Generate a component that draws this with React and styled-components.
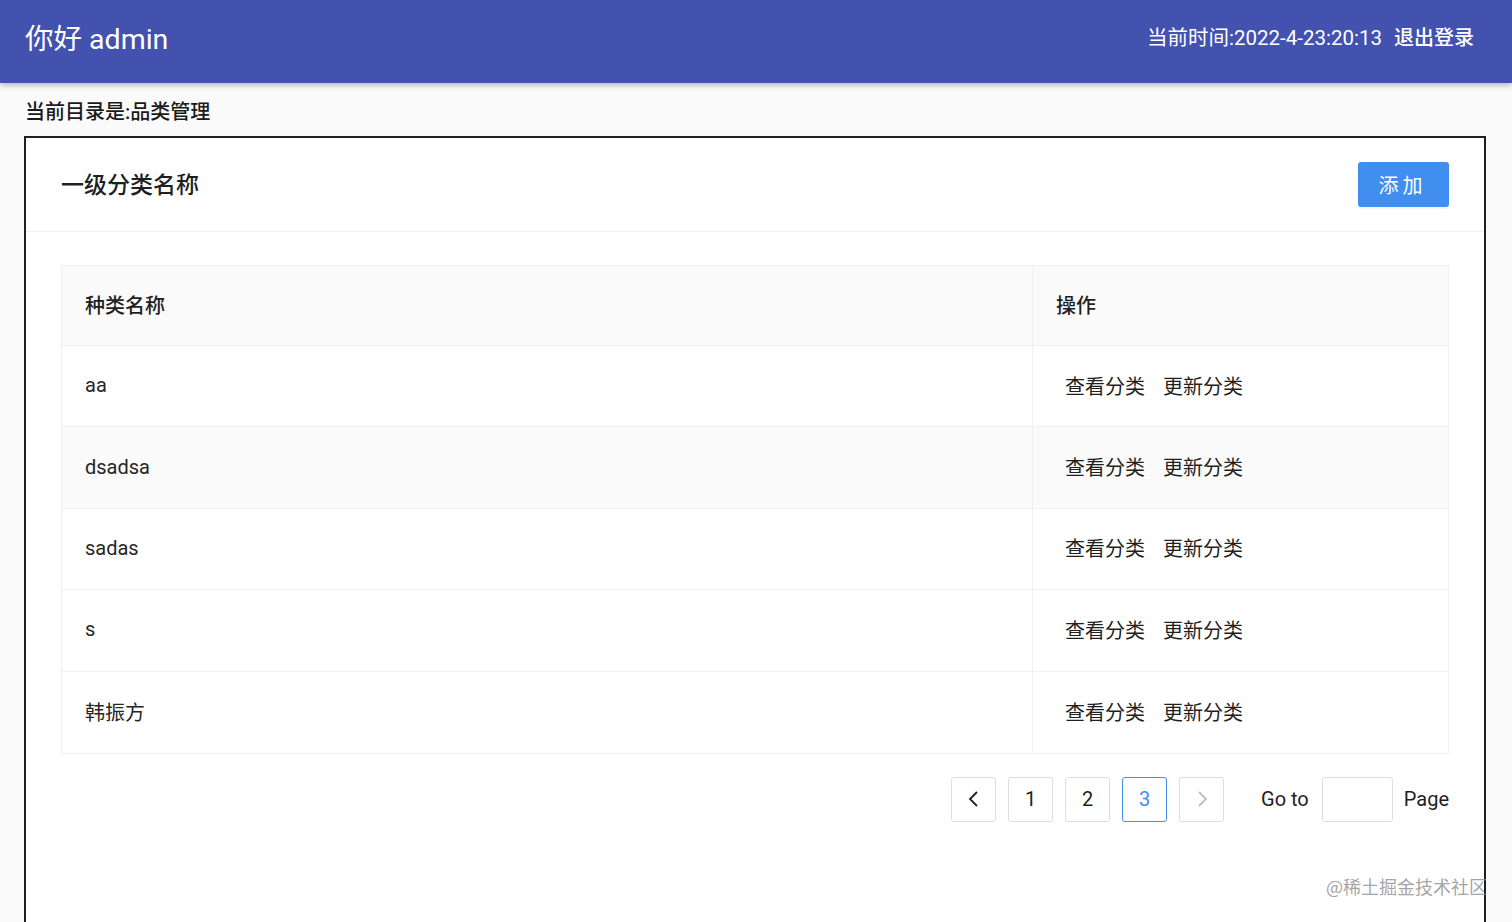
import React from 'react';
import styled, { createGlobalStyle } from 'styled-components';

const GlobalStyle = createGlobalStyle`
  html, body {
    margin: 0;
    padding: 0;
    height: 100%;
    overflow: hidden;
    background: #fafafa;
    font-family: Roboto, "Noto Sans CJK SC", "Noto Sans", sans-serif;
    color: rgba(0, 0, 0, 0.85);
  }
  * { box-sizing: border-box; }
`;

const Page = styled.div`
  position: relative;
  width: 1512px;
  height: 922px;
  overflow: hidden;
  background: #fafafa;
`;

const Header = styled.header`
  height: 83px;
  background: #4351af;
  display: flex;
  align-items: center;
  justify-content: space-between;
  padding: 0 38px 11px 25px;
  box-shadow: 0 2px 6px rgba(0, 0, 0, 0.3);
  position: relative;
  z-index: 1;
  color: #fff;
`;

const Hello = styled.h1`
  margin: 0;
  font-size: 28.5px;
  font-weight: 400;
`;

const HeaderRight = styled.div`
  display: flex;
  align-items: center;
  gap: 12px;
  font-size: 20.5px;
`;

const Logout = styled.a`
  color: #fff;
  cursor: pointer;
  font-size: 20px;
  font-weight: 500;
`;

const Main = styled.main`
  padding: 14px 26px 0 24px;
`;

const Crumb = styled.div`
  font-size: 20px;
  line-height: 30px;
  font-weight: 500;
  color: #1a1a1a;
  padding-left: 1px;
  margin-bottom: 9px;
`;

const Card = styled.section`
  border: 2px solid #1f1f1f;
  background: #fff;
  min-height: 820px;
`;

const CardHead = styled.div`
  height: 94px;
  border-bottom: 1px solid #efefef;
  display: flex;
  align-items: center;
  justify-content: space-between;
  padding: 0 35px;
`;

const CardTitle = styled.div`
  font-size: 23px;
  font-weight: 500;
  color: #1f1f1f;
  padding-bottom: 3px;
`;

const AddButton = styled.button`
  width: 91px;
  height: 45px;
  border: none;
  border-radius: 3px;
  background: #3f8ef0;
  color: #fff;
  font-family: inherit;
  font-size: 20px;
  letter-spacing: 4px;
  padding-left: 4px;
  box-shadow: 0 2px 0 rgba(0, 0, 0, 0.04);
`;

const CardBody = styled.div`
  padding: 33px 35px;
`;

const Table = styled.div`
  border: 1px solid #f0f0f0;
  display: grid;
  grid-template-columns: 971px 1fr;
`;

const Cell = styled.div`
  height: ${p => (p.head ? '80px' : '81.4px')};
  display: flex;
  align-items: center;
  padding-left: ${p => (p.pad || 23)}px;
  padding-bottom: 2px;
  background: ${p => (p.shade ? '#fafafa' : '#fff')};
  border-bottom: ${p => (p.last ? 'none' : '1px solid #f0f0f0')};
  border-right: ${p => (p.first ? '1px solid #f0f0f0' : 'none')};
  font-size: 20px;
  font-weight: ${p => (p.head ? 500 : 400)};
  color: ${p => (p.head ? '#1f1f1f' : '#262626')};
`;

const ActionLink = styled.a`
  color: #1f1f1f;
  font-size: 20px;
  margin-right: 18px;
  cursor: pointer;
`;

const Pager = styled.div`
  display: flex;
  justify-content: flex-end;
  align-items: center;
  margin-top: 23px;
  gap: 12px;
  font-size: 20px;
`;

const PageItem = styled.div`
  width: 45px;
  height: 45px;
  border: 1px solid ${p => (p.active ? '#3f8ef0' : '#dedede')};
  border-radius: 3px;
  display: flex;
  align-items: center;
  justify-content: center;
  color: ${p => (p.active ? '#3f8ef0' : p.disabled ? '#bdbdbd' : '#1f1f1f')};
  background: #fff;
  font-size: 20px;
`;

const Jumper = styled.div`
  display: flex;
  align-items: center;
  margin-left: 25px;
  color: #1f1f1f;
`;

const JumpInput = styled.div`
  width: 71px;
  height: 45px;
  border: 1px solid #dedede;
  border-radius: 3px;
  background: #fff;
  margin: 0 11px 0 13px;
`;

const Watermark = styled.div`
  position: absolute;
  right: 25px;
  top: 873px;
  font-size: 18px;
  color: rgba(140, 140, 140, 0.8);
  font-family: "Noto Sans CJK SC", sans-serif;
`;

const Chevron = ({ dir }) => (
  <svg width="14" height="18" viewBox="0 0 14 18" fill="none" stroke="currentColor" strokeWidth="1.8">
    {dir === 'left' ? <path d="M10 2 L3 9 L10 16" /> : <path d="M4 2 L11 9 L4 16" />}
  </svg>
);

const rows = ['aa', 'dsadsa', 'sadas', 's', '韩振方'];

export default function App() {
  return (
    <Page>
      <GlobalStyle />
      <Header>
        <Hello>你好 admin</Hello>
        <HeaderRight>
          <span>当前时间:2022-4-23:20:13</span>
          <Logout>退出登录</Logout>
        </HeaderRight>
      </Header>
      <Main>
        <Crumb>当前目录是:品类管理</Crumb>
        <Card>
          <CardHead>
            <CardTitle>一级分类名称</CardTitle>
            <AddButton>添加</AddButton>
          </CardHead>
          <CardBody>
            <Table>
              <Cell head shade first>种类名称</Cell>
              <Cell head shade>操作</Cell>
              {rows.map((name, i) => (
                <React.Fragment key={name}>
                  <Cell first shade={i === 1} last={i === rows.length - 1}>{name}</Cell>
                  <Cell pad={32} shade={i === 1} last={i === rows.length - 1}>
                    <ActionLink>查看分类</ActionLink>
                    <ActionLink>更新分类</ActionLink>
                  </Cell>
                </React.Fragment>
              ))}
            </Table>
            <Pager>
              <PageItem><Chevron dir="left" /></PageItem>
              <PageItem>1</PageItem>
              <PageItem>2</PageItem>
              <PageItem active>3</PageItem>
              <PageItem disabled><Chevron dir="right" /></PageItem>
              <Jumper>
                Go to
                <JumpInput />
                Page
              </Jumper>
            </Pager>
          </CardBody>
        </Card>
      </Main>
      <Watermark>@稀土掘金技术社区</Watermark>
    </Page>
  );
}
